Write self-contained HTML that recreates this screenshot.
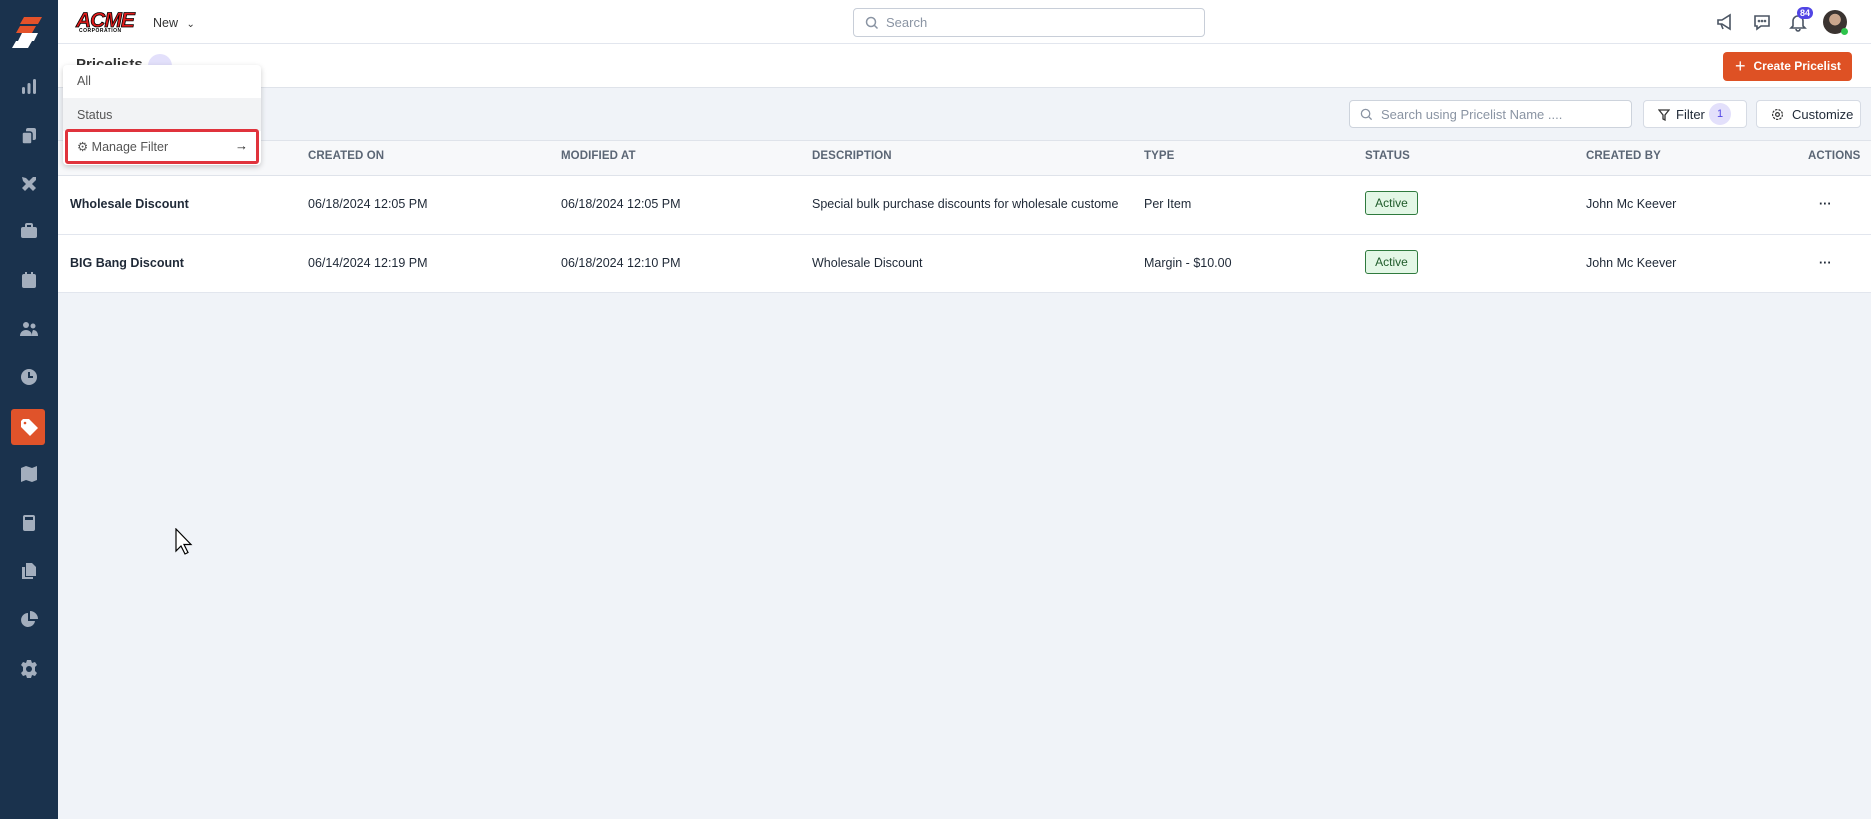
<!DOCTYPE html>
<html><head><meta charset="utf-8">
<style>
*{box-sizing:border-box;margin:0;padding:0}
body{width:1871px;height:819px;overflow:hidden;font-family:"Liberation Sans",sans-serif;background:#f0f3f8;position:relative;color:#1f2937}
.abs{position:absolute}
#side{left:0;top:0;width:58px;height:819px;background:#1a324d}
.ic{position:absolute;left:19px;width:20px;height:20px;fill:#a3aebd}
#hdr{left:58px;top:0;right:0;height:44px;background:#fff;border-bottom:1px solid #e2e6ee}
#sub{left:58px;top:44px;right:0;height:44px;background:#fff;border-bottom:1px solid #dfe3ea}
#tbl{left:58px;top:140px;right:0;height:153px;background:#fff}
.th{position:absolute;top:150px;font-size:11.5px;color:#5b6675;font-weight:bold;letter-spacing:.1px}
.td{position:absolute;font-size:12.5px;color:#1f2937}
.badge{position:absolute;left:1365px;width:53px;height:24px;border:1px solid #2f7a3e;background:#e3f7e6;border-radius:3px;font-size:12px;color:#1f5b2a;text-align:center;line-height:22px}
.btn{position:absolute;background:#fff;border:1px solid #d6dbe4;border-radius:4px;font-size:13px;color:#1f2937}
</style></head><body>
<div id="side" class="abs">
 <svg class="abs" style="left:12px;top:17px" width="34" height="32" viewBox="0 0 34 32"><polygon points="12,0 30,0 26,7 8,7" fill="#e4522a"/><polygon points="8,9 24,9 20,16 4,16" fill="#e4522a"/><polygon points="10,16 26,16 22,24 6,24" fill="#fff"/><polygon points="4,24 20,24 16,31 0,31" fill="#fff"/></svg>
 <svg class="ic" style="top:77px" viewBox="0 0 20 20"><rect x="3" y="10" width="3" height="7" rx="1.5"/><rect x="8.5" y="6" width="3" height="11" rx="1.5"/><rect x="14" y="2" width="3" height="15" rx="1.5"/></svg>
 <svg class="ic" style="top:126px" viewBox="0 0 20 20"><rect x="7" y="2" width="10" height="12" rx="2"/><rect x="3" y="6" width="10" height="12" rx="2" stroke="#1a324d" stroke-width="1.5"/></svg>
 <svg class="ic" style="top:174px" viewBox="0 0 20 20"><path d="M3 3l4 1 10 10-3 3L4 7z"/><path d="M17 3l-3 0-11 11 3 3 11-11z"/></svg>
 <svg class="ic" style="top:221px" viewBox="0 0 20 20"><rect x="2" y="6" width="16" height="11" rx="2"/><rect x="7" y="3" width="6" height="4" rx="1" fill="none" stroke="#a3aebd" stroke-width="2"/></svg>
 <svg class="ic" style="top:270px" viewBox="0 0 20 20"><rect x="3" y="4" width="14" height="14" rx="2"/><rect x="6" y="2" width="2" height="4"/><rect x="12" y="2" width="2" height="4"/></svg>
 <svg class="ic" style="top:319px" viewBox="0 0 20 20"><circle cx="7" cy="6" r="3"/><circle cx="14" cy="7" r="2.5"/><path d="M1 17c0-4 3-6 6-6s6 2 6 6z"/><path d="M13 17c0-3 0-4 1-6 3 0 5 2 5 6z"/></svg>
 <svg class="ic" style="top:367px" viewBox="0 0 20 20"><circle cx="10" cy="10" r="8"/><path d="M10 5v5h4" stroke="#1a324d" stroke-width="2" fill="none"/></svg>
 <div class="abs" style="left:11px;top:409px;width:34px;height:36px;background:#e0532a;border-radius:3px"></div>
 <svg class="ic" style="top:417px;fill:#fff" viewBox="0 0 20 20"><path d="M2 4v6l9 9 8-8-9-9H4z"/><circle cx="6" cy="6" r="1.3" fill="#e0532a"/></svg>
 <svg class="ic" style="top:464px" viewBox="0 0 20 20"><path d="M2 4l5-2 6 2 5-2v14l-5 2-6-2-5 2z"/></svg>
 <svg class="ic" style="top:513px" viewBox="0 0 20 20"><rect x="4" y="2" width="12" height="16" rx="2"/><rect x="6" y="4" width="8" height="3" fill="#1a324d"/></svg>
 <svg class="ic" style="top:561px" viewBox="0 0 20 20"><path d="M7 2h6l4 4v9H7z"/><path d="M3 6h3v10h8v2H3z"/></svg>
 <svg class="ic" style="top:610px" viewBox="0 0 20 20"><path d="M9 3a7 7 0 1 0 7 8H9z"/><path d="M11 1v8h8a8 8 0 0 0-8-8z"/></svg>
 <svg class="ic" style="top:659px" viewBox="0 0 20 20"><path d="M8 1h4l1 3 3-1 2 3-2 2v4l2 2-2 3-3-1-1 3H8l-1-3-3 1-2-3 2-2V8L2 6l2-3 3 1z"/><circle cx="10" cy="10" r="3" fill="#1a324d"/></svg>
</div>
<div id="hdr" class="abs"></div>
<div class="abs" style="left:76px;top:9px;font-family:'Liberation Sans';font-weight:900;font-size:21px;color:#e11b1b;letter-spacing:-1px;font-style:italic;-webkit-text-stroke:.8px #000">ACME</div>
<div class="abs" style="left:79px;top:28px;font-size:5px;font-weight:bold;letter-spacing:.5px;color:#000">CORPORATION</div>
<div class="abs" style="left:153px;top:16px;font-size:12.5px;color:#333">New <span style="font-size:10px;margin-left:5px">&#8964;</span></div>
<div class="abs" style="left:853px;top:8px;width:352px;height:29px;border:1px solid #c8ced8;border-radius:4px;background:#fff"><svg class="abs" style="left:11px;top:7px" width="14" height="14" viewBox="0 0 14 14"><circle cx="6" cy="6" r="4.5" fill="none" stroke="#8a94a3" stroke-width="1.5"/><path d="M9.5 9.5l3 3" stroke="#8a94a3" stroke-width="1.5"/></svg><span class="abs" style="left:32px;top:6px;font-size:13px;color:#8a94a3">Search</span></div>
<svg class="abs" style="left:1715px;top:12px" width="20" height="20" viewBox="0 0 20 20" fill="none" stroke="#4b5563" stroke-width="1.6"><path d="M3 8h4l8-5v14l-8-5H3z"/><path d="M6 12l2 5"/></svg>
<svg class="abs" style="left:1752px;top:12px" width="20" height="20" viewBox="0 0 20 20" fill="none" stroke="#4b5563" stroke-width="1.6"><path d="M3 4h14v10H9l-4 3v-3H3z"/><circle cx="7" cy="9" r=".5"/><circle cx="10" cy="9" r=".5"/><circle cx="13" cy="9" r=".5"/></svg>
<svg class="abs" style="left:1788px;top:12px" width="20" height="20" viewBox="0 0 20 20" fill="none" stroke="#4b5563" stroke-width="1.6"><path d="M5 14V9a5 5 0 0 1 10 0v5l2 2H3z"/><path d="M8 17a2 2 0 0 0 4 0"/></svg>
<div class="abs" style="left:1797px;top:7px;width:16px;height:12px;border-radius:6px;background:#5145e5;color:#fff;font-size:9px;text-align:center;line-height:12px;font-weight:bold">84</div>
<div class="abs" style="left:1823px;top:10px;width:24px;height:24px;border-radius:50%;background:radial-gradient(circle at 50% 40%,#c9a58c 0 30%,#3a3330 32%)"></div>
<div class="abs" style="left:1841px;top:28px;width:7px;height:7px;border-radius:50%;background:#2ec44c"></div>
<div id="sub" class="abs"></div>
<div class="abs" style="left:76px;top:56px;font-size:15px;font-weight:bold;color:#333">Pricelists</div>
<div class="abs" style="left:148px;top:54px;width:24px;height:24px;border-radius:50%;background:#e3e0fb"></div>
<div class="abs" style="left:1723px;top:52px;width:129px;height:29px;background:#de5124;border-radius:4px;color:#fff;font-size:12px;font-weight:bold;line-height:29px;padding-left:12px"><span style="font-size:18px;font-weight:normal;vertical-align:-2px;margin-right:8px">+</span>Create Pricelist</div>
<div class="abs" style="left:1349px;top:100px;width:283px;height:28px;border:1px solid #cdd3dc;border-radius:4px;background:#fff"><svg class="abs" style="left:10px;top:7px" width="13" height="13" viewBox="0 0 14 14"><circle cx="6" cy="6" r="4.5" fill="none" stroke="#8a94a3" stroke-width="1.4"/><path d="M9.5 9.5l3 3" stroke="#8a94a3" stroke-width="1.4"/></svg><span class="abs" style="left:31px;top:6px;font-size:13px;color:#8a94a3">Search using Pricelist Name ....</span></div>
<div class="btn" style="left:1643px;top:100px;width:104px;height:28px"><svg class="abs" style="left:14px;top:8px" width="12" height="12" viewBox="0 0 12 12" fill="none" stroke="#333" stroke-width="1.3"><path d="M1 1h10L7 6v5L5 10V6z"/></svg><span class="abs" style="left:32px;top:6px">Filter</span><span class="abs" style="left:65px;top:2px;width:22px;height:22px;border-radius:50%;background:#e3e0fb;color:#5145e5;font-size:11px;text-align:center;line-height:22px">1</span></div>
<div class="btn" style="left:1756px;top:100px;width:105px;height:28px"><svg class="abs" style="left:14px;top:7px" width="13" height="13" viewBox="0 0 14 14" fill="none" stroke="#333" stroke-width="1.3"><circle cx="7" cy="7" r="2"/><circle cx="7" cy="7" r="5.3" stroke-dasharray="2.5 1.2"/></svg><span class="abs" style="left:35px;top:6px">Customize</span></div>
<div id="tbl" class="abs"></div>
<div class="abs" style="left:58px;top:140px;right:0;height:36px;background:#f7f8fa;border-top:1px solid #dfe3ea;border-bottom:1px solid #dfe3ea"></div>
<div class="abs" style="left:58px;top:234px;right:0;height:1px;background:#e2e6ee"></div>
<div class="abs" style="left:58px;top:292px;right:0;height:1px;background:#e2e6ee"></div>
<div class="th" style="left:308px">CREATED ON</div><div class="th" style="left:561px">MODIFIED AT</div><div class="th" style="left:812px">DESCRIPTION</div><div class="th" style="left:1144px">TYPE</div><div class="th" style="left:1365px">STATUS</div><div class="th" style="left:1586px">CREATED BY</div><div class="th" style="left:1808px">ACTIONS</div>
<div class="td" style="left:70px;top:197px;font-weight:bold">Wholesale Discount</div>
<div class="td" style="left:308px;top:197px">06/18/2024 12:05 PM</div>
<div class="td" style="left:561px;top:197px">06/18/2024 12:05 PM</div>
<div class="td" style="left:812px;top:197px;width:310px;white-space:nowrap;overflow:hidden">Special bulk purchase discounts for wholesale custome</div>
<div class="td" style="left:1144px;top:197px">Per Item</div>
<div class="badge" style="top:191px">Active</div>
<div class="td" style="left:1586px;top:197px">John Mc Keever</div>
<div class="td" style="left:1819px;top:197px;font-weight:bold">&middot;&middot;&middot;</div>
<div class="td" style="left:70px;top:256px;font-weight:bold">BIG Bang Discount</div>
<div class="td" style="left:308px;top:256px">06/14/2024 12:19 PM</div>
<div class="td" style="left:561px;top:256px">06/18/2024 12:10 PM</div>
<div class="td" style="left:812px;top:256px">Wholesale Discount</div>
<div class="td" style="left:1144px;top:256px">Margin - $10.00</div>
<div class="badge" style="top:250px">Active</div>
<div class="td" style="left:1586px;top:256px">John Mc Keever</div>
<div class="td" style="left:1819px;top:256px;font-weight:bold">&middot;&middot;&middot;</div>
<div class="abs" style="left:63px;top:65px;width:198px;height:100px;background:#fff;border-radius:4px;box-shadow:0 2px 6px rgba(0,0,0,.2)">
 <div class="abs" style="left:0;top:33px;width:198px;height:33px;background:#f2f3f5"></div>
 <div class="abs" style="left:14px;top:9px;font-size:12.5px;color:#555">All</div>
 <div class="abs" style="left:14px;top:43px;font-size:12.5px;color:#555">Status</div>
</div>
<div class="abs" style="left:65px;top:129px;width:194px;height:35px;border:3px solid #e0333c;border-radius:3px;background:#fff">
 <span class="abs" style="left:9px;top:7px;font-size:12.5px;color:#555">&#9881; Manage Filter</span>
 <span class="abs" style="left:167px;top:6px;font-size:13px;color:#222">&rarr;</span>
</div>
<svg class="abs" style="left:175px;top:528px" width="20" height="28" viewBox="0 0 20 28"><path d="M1 1v22l5-5 4 8 3-1.5-4-8h7z" fill="#fff" stroke="#000" stroke-width="1.2"/></svg>
</body></html>
